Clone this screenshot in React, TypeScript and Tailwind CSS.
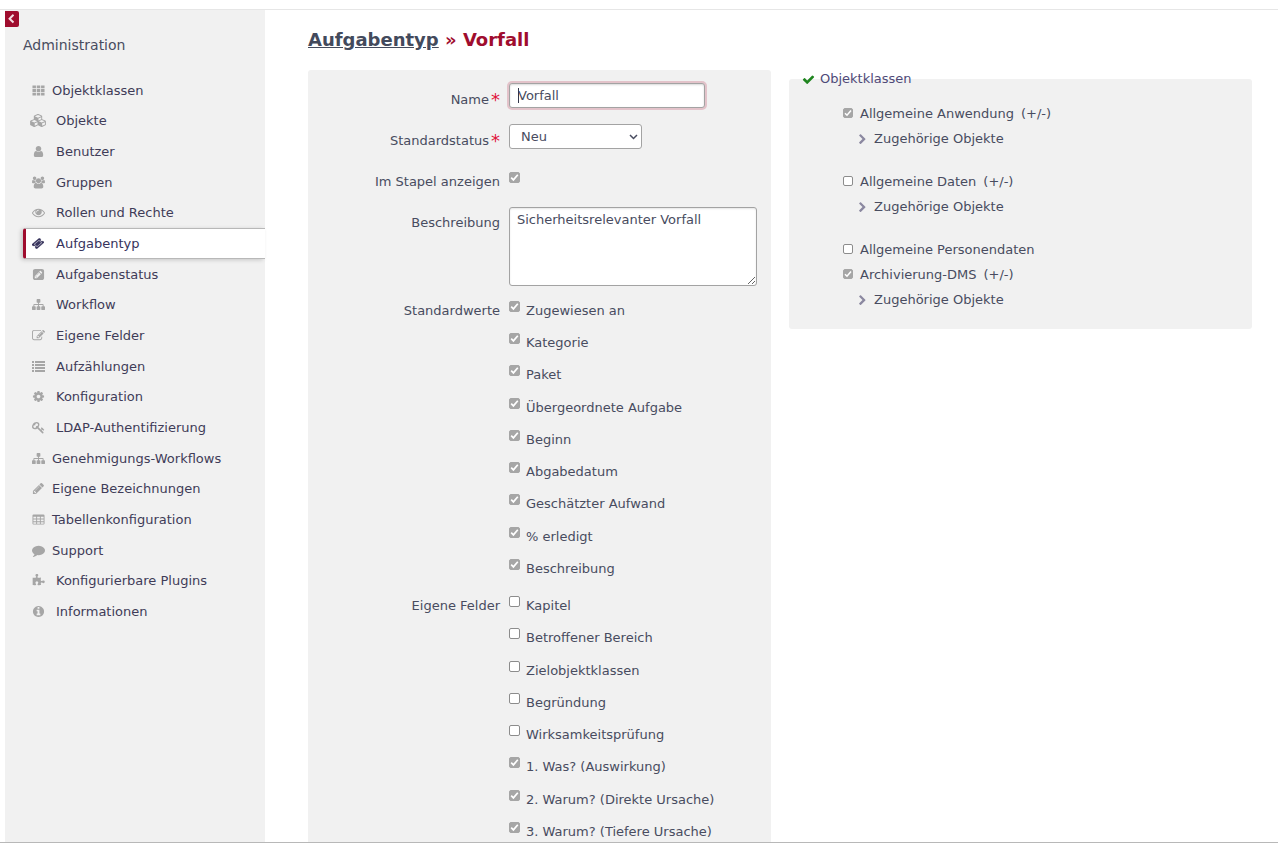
import type { ReactNode } from 'react';

const shapes = {
  th: {
    box: '0 0 1664 1792',
    d: 'M0 192h480v384h-480zM592 192h480v384h-480zM1184 192h480v384h-480zM0 704h480v384h-480zM592 704h480v384h-480zM1184 704h480v384h-480zM0 1216h480v384h-480zM592 1216h480v384h-480zM1184 1216h480v384h-480z',
  },
  cubes: {
    box: '0 0 2176 1792',
    d: 'M640 1632l384-192v-314l-384 164v342zm-64-454l404-173-404-173-404 173zm1088 454l384-192v-314l-384 164v342zm-64-454l404-173-404-173-404 173zm-448-293l384-165v-266l-384 164v267zm-64-379l441-189-441-189-441 189zm1088 518v416q0 36-19 67t-52 47l-448 224q-25 14-57 14t-57-14l-448-224q-5-2-7-4-2 2-7 4l-448 224q-25 14-57 14t-57-14l-448-224q-33-16-52-47t-19-67v-416q0-38 21.5-70t56.5-48l434-186v-400q0-38 21.5-70t56.5-48l448-192q23-10 50-10t50 10l448 192q35 16 56.5 48t21.5 70v400l434 186q36 16 57 48t21 70z',
  },
  user: {
    box: '0 0 1792 1792',
    d: 'M1536 1399q0 109-62.5 187t-150.5 78h-854q-88 0-150.5-78t-62.5-187q0-85 8.5-160.5t31.5-152 58.5-131 94-89 134.5-34.5q131 128 313 128t313-128q76 0 134.5 34.5t94 89 58.5 131 31.5 152 8.5 160.5zm-256-887q0 159-112.5 271.5t-271.5 112.5-271.5-112.5-112.5-271.5 112.5-271.5 271.5-112.5 271.5 112.5 112.5 271.5z',
  },
  users: {
    box: '0 0 1920 1792',
    d: 'M593 896q-162 5-265 128h-134q-82 0-138-40.5t-56-118.5q0-353 124-353 6 0 43.5 21t97.5 42.5 119 21.5q67 0 133-23-5 37-5 66 0 139 81 256zm1071 637q0 120-73 189.5t-194 69.5h-874q-121 0-194-69.5t-73-189.5q0-53 3.5-103.5t14-109 26.5-108.5 43-97.5 62-81 85.5-53.5 111.5-20q10 0 43 21.5t73 48 107 48 135 21.5 135-21.5 107-48 73-48 43-21.5q61 0 111.5 20t85.5 53.5 62 81 43 97.5 26.5 108.5 14 109 3.5 103.5zm-1024-1277q0 106-75 181t-181 75-181-75-75-181 75-181 181-75 181 75 75 181zm704 384q0 159-112.5 271.5t-271.5 112.5-271.5-112.5-112.5-271.5 112.5-271.5 271.5-112.5 271.5 112.5 112.5 271.5zm576 225q0 78-56 118.5t-138 40.5h-134q-103-123-265-128 81-117 81-256 0-29-5-66 66 23 133 23 59 0 119-21.5t97.5-42.5 43.5-21q124 0 124 353zm-128-609q0 106-75 181t-181 75-181-75-75-181 75-181 181-75 181 75 75 181z',
  },
  eye: {
    box: '0 0 1792 1792',
    d: 'M1664 960q-152-236-381-353 61 104 61 225 0 185-131.5 316.5t-316.5 131.5-316.5-131.5-131.5-316.5q0-121 61-225-229 117-381 353 133 205 333.5 326.5t434.5 121.5 434.5-121.5 333.5-326.5zm-720-384q0-20-14-34t-34-14q-125 0-214.5 89.5t-89.5 214.5q0 20 14 34t34 14 34-14 14-34q0-86 61-147t147-61q20 0 34-14t14-34zm848 384q0 34-20 69-140 230-376.5 368.5t-499.5 138.5-499.5-139-376.5-368q-20-35-20-69t20-69q140-229 376.5-368t499.5-139 499.5 139 376.5 368q20 35 20 69z',
  },
  ticket: {
    box: '60 0 1672 1792',
    d: 'M1024 452l316 316-572 572-316-316zm-211 979l618-618q19-19 19-45t-19-45l-362-362q-18-18-45-18t-45 18l-618 618q-19 19-19 45t19 45l362 362q18 18 45 18t45-18zm889-637l-907 908q-37 37-90.5 37t-90.5-37l-126-126q56-56 56-136t-56-136-136-56-136 56l-125-126q-37-37-37-90.5t37-90.5l907-906q37-37 90.5-37t90.5 37l125 125q-56 56-56 136t56 136 136 56 136-56l126 125q37 37 37 90.5t-37 90.5z',
  },
  pencilSquare: {
    box: '-128 0 1792 1792',
    d: 'M404 1108l152 152-52 52h-56v-96h-96v-56zm414-390q14 13-3 30l-291 291q-17 17-30 3-14-13 3-30l291-291q17-17 30-3zm-274 690l544-544-288-288-544 544v288h288zm608-608l92-92q28-28 28-68t-28-68l-152-152q-28-28-68-28t-68 28l-92 92zm384-384v960q0 119-84.5 203.5t-203.5 84.5h-960q-119 0-203.5-84.5t-84.5-203.5v-960q0-119 84.5-203.5t203.5-84.5h960q119 0 203.5 84.5t84.5 203.5z',
  },
  sitemap: {
    box: '0 0 1792 1792',
    d: 'M1792 1248v320q0 40-28 68t-68 28h-320q-40 0-68-28t-28-68v-320q0-40 28-68t68-28h96v-192h-512v192h96q40 0 68 28t28 68v320q0 40-28 68t-68 28h-320q-40 0-68-28t-28-68v-320q0-40 28-68t68-28h96v-192h-512v192h96q40 0 68 28t28 68v320q0 40-28 68t-68 28h-320q-40 0-68-28t-28-68v-320q0-40 28-68t68-28h96v-192q0-52 38-90t90-38h512v-192h-96q-40 0-68-28t-28-68v-320q0-40 28-68t68-28h320q40 0 68 28t28 68v320q0 40-28 68t-68 28h-96v192h512q52 0 90 38t38 90v192h96q40 0 68 28t28 68z',
  },
  edit: {
    box: '0 0 1792 1792',
    d: 'M888 1184l116-116-152-152-116 116v56h96v96h56zm440-720q-16-16-33 1l-350 350q-17 17-1 33t33-1l350-350q17-17 1-33zm80 594v190q0 119-84.5 203.5t-203.5 84.5h-832q-119 0-203.5-84.5t-84.5-203.5v-832q0-119 84.5-203.5t203.5-84.5h832q63 0 117 25 15 7 18 23 3 17-9 29l-49 49q-14 14-32 8-23-6-45-6h-832q-66 0-113 47t-47 113v832q0 66 47 113t113 47h832q66 0 113-47t47-113v-126q0-13 9-22l64-64q15-15 35-7t20 29zm-96-738l288 288-672 672h-288v-288zm444 132l-92 92-288-288 92-92q28-28 68-28t68 28l152 152q28 28 28 68t-28 68z',
  },
  list: {
    box: '0 0 1792 1792',
    d: 'M0 138h276v276h-276zM414 138h1378v276h-1378zM0 552h276v276h-276zM414 552h1378v276h-1378zM0 966h276v276h-276zM414 966h1378v276h-1378zM0 1380h276v276h-276zM414 1380h1378v276h-1378z',
  },
  cog: {
    box: '0 0 1792 1792',
    d: 'M1152 896q0-106-75-181t-181-75-181 75-75 181 75 181 181 75 181-75 75-181zm512-109v222q0 12-8 23t-20 13l-185 28q-19 54-39 91 35 50 107 138 10 12 10 25t-9 23q-27 37-99 108t-94 71q-12 0-26-9l-138-108q-44 23-91 38-16 136-29 186-7 28-36 28h-222q-14 0-24.5-8.5t-11.5-21.5l-28-184q-49-16-90-37l-141 107q-10 9-25 9-14 0-25-11-126-114-165-168-7-10-7-23 0-12 8-23 15-21 51-66.5t54-70.5q-27-50-41-99l-183-27q-13-2-21-12.5t-8-23.5v-222q0-12 8-23t19-13l186-28q14-46 39-92-40-57-107-138-10-12-10-24 0-10 9-23 26-36 98.5-107.5t94.5-71.5q13 0 26 10l138 107q44-23 91-38 16-136 29-186 7-28 36-28h222q14 0 24.5 8.5t11.5 21.5l28 184q49 16 90 37l142-107q9-9 24-9 13 0 25 10 129 119 165 170 7 8 7 22 0 12-8 23-15 21-51 66.5t-54 70.5q26 50 41 98l183 28q13 2 21 12.5t8 23.5z',
  },
  key: {
    box: '0 0 1792 1792',
    d: 'M832 512q0-80-56-136t-136-56-136 56-56 136q0 42 19 83-41-19-83-19-80 0-136 56t-56 136 56 136 136 56 136-56 56-136q0-42-19-83 41 19 83 19 80 0 136-56t56-136zm851 704q0 17-49 66t-66 49q-9 0-28.5-16t-36.5-33-38.5-40-24.5-26l-96 96 220 220q28 28 28 68 0 42-39 81t-81 39q-40 0-68-28l-671-671q-176 131-365 131-163 0-265.5-102.5t-102.5-265.5q0-160 95-313t248-248 313-95q163 0 265.5 102.5t102.5 265.5q0 189-131 365l355 355 96-96q-3-3-26-24.5t-40-38.5-33-36.5-16-28.5q0-17 49-66t66-49q13 0 23 10 6 6 46 44.5t82 79.5 86.5 86 73 78 28.5 41z',
  },
  pencil: {
    box: '0 0 1792 1792',
    d: 'M491 1536l91-91-235-235-91 91v107h128v128h107zm523-928q0-22-22-22-10 0-17 7l-542 542q-7 7-7 17 0 22 22 22 10 0 17-7l542-542q7-7 7-17zm-54-192l416 416-832 832h-416v-416zm683 96q0 53-37 90l-166 166-416-416 166-165q36-38 90-38 53 0 91 38l235 234q37 39 37 91z',
  },
  table: {
    box: '0 0 1664 1792',
    d: 'M160 192h1344q160 0 160 160v1088q0 160-160 160h-1344q-160 0-160-160v-1088q0-160 160-160zM128 512v256h384v-256zM640 512v256h384v-256zM1152 512v256h384v-256zM128 896v256h384v-256zM640 896v256h384v-256zM1152 896v256h384v-256zM128 1280v192h384v-192zM640 1280v192h384v-192zM1152 1280v192h384v-192z',
  },
  comment: {
    box: '0 0 1792 1792',
    d: 'M1792 896q0 174-120 321.5t-326 233-450 85.5q-70 0-145-8-198 175-460 242-49 14-114 22-17 2-30.5-9t-17.5-29v-1q-3-4-.5-12t2-10 4.5-9.5l6-9 7-8.5 8-9q7-8 31-34.5t34.5-38 31-39.5 32.5-51 27-59 26-76q-157-89-247.5-220t-90.5-281q0-130 71-248.5t191-204.5 286-136.5 348-50.5q244 0 450 85.5t326 233 120 321.5z',
  },
  puzzle: {
    box: '0 0 1792 1792',
    d: 'M1755 1083q0 81-44.5 135t-123.5 54q-41 0-77.5-17.5t-59-38-56.5-38-71-17.5q-110 0-110 124 0 39 16 115t15 115v5q-22 0-33 1-34 3-97.5 11.5t-115.5 13.5-98 5q-61 0-103-26.5t-42-83.5q0-37 17.5-71t38-56.5 38-59 17.5-77.5q0-79-54-123.5t-135-44.5q-84 0-143 45.5t-59 127.5q0 43 15 83t33.5 64.5 33.5 53 15 50.5q0 45-46 89-37 35-117 35-95 0-245-24-9-2-27.5-4t-27.5-4l-13-2q-1 0-3-1-2 0-2-1v-1024q2 1 17.5 3.5t34 5 21.5 3.5q150 24 245 24 80 0 117-35 46-44 46-89 0-22-15-50.5t-33.5-53-33.5-64.5-15-83q0-82 59-127.5t144-45.5q80 0 134 44.5t54 123.5q0 41-17.5 77.5t-38 59-38 56.5-17.5 71q0 57 42 83.5t103 26.5q64 0 180-15t163-17v2q-1 2-3.5 17.5t-5 34-3.5 21.5q-24 150-24 245 0 80 35 117 44 46 89 46 22 0 50.5-15t53-33.5 64.5-33.5 83-15q82 0 127.5 59t45.5 143z',
  },
  info: {
    box: '0 0 1792 1792',
    d: 'M1152 1376v-160q0-14-9-23t-23-9h-96v-512q0-14-9-23t-23-9h-320q-14 0-23 9t-9 23v160q0 14 9 23t23 9h96v320h-96q-14 0-23 9t-9 23v160q0 14 9 23t23 9h448q14 0 23-9t9-23zm-128-896v-160q0-14-9-23t-23-9h-192q-14 0-23 9t-9 23v160q0 14 9 23t23 9h192q14 0 23-9t9-23zm640 416q0 209-103 385.5t-279.5 279.5-385.5 103-385.5-103-279.5-279.5-103-385.5 103-385.5 279.5-279.5 385.5-103 385.5 103 279.5 279.5 103 385.5z',
  },
  check: {
    box: '0 0 1792 1792',
    d: 'M1671 566q0 40-28 68l-724 724-136 136q-28 28-68 28t-68-28l-136-136-362-362q-28-28-28-68t28-68l136-136q28-28 68-28t68 28l294 295 656-657q28-28 68-28t68 28l136 136q28 28 28 68z',
  },
  chevronLeft: {
    box: '0 0 1792 1792',
    d: 'M1427 301l-531 531 531 531q19 19 19 45t-19 45l-166 166q-19 19-45 19t-45-19l-742-742q-19-19-19-45t19-45l742-742q19-19 45-19t45 19l166 166q19 19 19 45t-19 45z',
  },
  chevronRight: {
    box: '0 0 1792 1792',
    d: 'M1363 877l-742 742q-19 19-45 19t-45-19l-166-166q-19-19-19-45t19-45l531-531-531-531q-19-19-19-45t19-45l166-166q19-19 45-19t45 19l742 742q19 19 19 45t-19 45z',
  },
};

type ShapeName = keyof typeof shapes;

function Icon({ name, className }: { name: ShapeName; className: string }) {
  const shape = shapes[name];
  const bold = name === 'ticket';
  return (
    <svg
      viewBox={shape.box}
      className={className}
      fill="currentColor"
      fillRule="evenodd"
      stroke={bold ? 'currentColor' : 'none'}
      strokeWidth={40}
      preserveAspectRatio={bold ? 'none' : 'xMidYMid meet'}
      aria-hidden="true"
    >
      <path d={shape.d} />
    </svg>
  );
}

type NavEntry = { label: string; icon: ShapeName; near?: boolean; active?: boolean };

const navEntries: NavEntry[] = [
  { label: 'Objektklassen', icon: 'th', near: true },
  { label: 'Objekte', icon: 'cubes' },
  { label: 'Benutzer', icon: 'user' },
  { label: 'Gruppen', icon: 'users' },
  { label: 'Rollen und Rechte', icon: 'eye' },
  { label: 'Aufgabentyp', icon: 'ticket', active: true },
  { label: 'Aufgabenstatus', icon: 'pencilSquare' },
  { label: 'Workflow', icon: 'sitemap' },
  { label: 'Eigene Felder', icon: 'edit' },
  { label: 'Aufzählungen', icon: 'list' },
  { label: 'Konfiguration', icon: 'cog' },
  { label: 'LDAP-Authentifizierung', icon: 'key' },
  { label: 'Genehmigungs-Workflows', icon: 'sitemap', near: true },
  { label: 'Eigene Bezeichnungen', icon: 'pencil', near: true },
  { label: 'Tabellenkonfiguration', icon: 'table', near: true },
  { label: 'Support', icon: 'comment', near: true },
  { label: 'Konfigurierbare Plugins', icon: 'puzzle' },
  { label: 'Informationen', icon: 'info' },
];

const iconSizes: Partial<Record<ShapeName, string>> = {
  cubes: 'h-[13px] w-4',
  ticket: 'h-[11px] w-3',
};

function Sidebar() {
  return (
    <aside className="ml-[5px] w-[260px] shrink-0 bg-[#f1f1f1] pt-px">
      <button
        type="button"
        aria-label="Seitenleiste einklappen"
        className="flex h-4 w-[14px] items-center justify-center rounded-r-[2px] bg-[#9f0d2e] text-[#f3dfe4]"
      >
        <Icon name="chevronLeft" className="mr-[2px] size-[10px]" />
      </button>
      <h2 className="mt-2 pl-[18px] text-sm leading-5 text-[#484c60]">Administration</h2>
      <nav className="mt-5 grid h-[552px] auto-rows-fr pl-[18px]">
        {navEntries.map((entry) => (
          <a
            key={entry.label}
            href={'#' + entry.label}
            className={
              entry.active
                ? 'flex items-center rounded-l-[3px] border-y border-l-[3px] border-y-[#b8b8b8] border-l-[#9f0d2e] bg-white pl-1 text-[#37335c] shadow-[-2px_1px_4px_rgba(0,0,0,0.18)]'
                : 'flex items-center pl-[7px] text-[#3f3c58]'
            }
          >
            <span className={entry.active ? 'flex w-4 justify-center' : 'flex w-4 justify-center text-[#a6a6a6]'}>
              <Icon name={entry.icon} className={iconSizes[entry.icon] ?? 'size-[13px]'} />
            </span>
            <span className={entry.near ? 'pl-[6px]' : 'pl-[10px]'}>{entry.label}</span>
          </a>
        ))}
      </nav>
    </aside>
  );
}

function Tick({ id, checked, className }: { id: string; checked: boolean; className: string }) {
  return (
    <span className={'grid shrink-0 ' + className}>
      <input
        id={id}
        type="checkbox"
        defaultChecked={checked}
        className="peer col-start-1 row-start-1 size-full appearance-none rounded-[2px] border border-[#8c8c8c] bg-white checked:border-[#a6a6a6] checked:bg-[#a6a6a6]"
      />
      <svg
        viewBox="0 0 11 11"
        className="pointer-events-none invisible col-start-1 row-start-1 size-full peer-checked:visible"
        fill="none"
        stroke="#ffffff"
        strokeWidth="1.7"
        aria-hidden="true"
      >
        <path d="M2.2 5.7L4.4 7.9L8.8 2.8" />
      </svg>
    </span>
  );
}

function Row({ label, htmlFor, required, children }: { label: string; htmlFor?: string; required?: boolean; children: ReactNode }) {
  const text = (
    <>
      {label}
      {required && <span className="pl-[2px] text-lg leading-5 text-[#e0143c]">*</span>}
    </>
  );
  return (
    <div className="grid min-h-[41px] grid-cols-[192px_minmax(0,1fr)] gap-[9px]">
      {htmlFor ? (
        <label htmlFor={htmlFor} className="flex justify-end self-start pt-[11px] leading-5">
          {text}
        </label>
      ) : (
        <span className="flex justify-end pt-[11px] leading-5">{text}</span>
      )}
      <div>{children}</div>
    </div>
  );
}

type Option = [string, boolean];

const defaults: Option[] = [
  ['Zugewiesen an', true],
  ['Kategorie', true],
  ['Paket', true],
  ['Übergeordnete Aufgabe', true],
  ['Beginn', true],
  ['Abgabedatum', true],
  ['Geschätzter Aufwand', true],
  ['% erledigt', true],
  ['Beschreibung', true],
];

const customFields: Option[] = [
  ['Kapitel', false],
  ['Betroffener Bereich', false],
  ['Zielobjektklassen', false],
  ['Begründung', false],
  ['Wirksamkeitsprüfung', false],
  ['1. Was? (Auswirkung)', true],
  ['2. Warum? (Direkte Ursache)', true],
  ['3. Warum? (Tiefere Ursache)', true],
];

function OptionList({ prefix, options, className }: { prefix: string; options: Option[]; className: string }) {
  return (
    <div className={'grid auto-rows-fr ' + className}>
      {options.map(([label, checked], i) => (
        <div key={label} className="flex gap-[6px]">
          <Tick id={prefix + i} checked={checked} className="mt-[11px] size-[11px]" />
          <label htmlFor={prefix + i} className="pt-[11px] leading-5">
            {label}
          </label>
        </div>
      ))}
    </div>
  );
}

function TypeForm() {
  return (
    <form className="min-w-0 flex-1 rounded-t-[3px] bg-[#f1f1f1] pt-[9px]">
      <Row label="Name" htmlFor="name" required>
        <div className="relative mt-1 w-[196px]">
          <input
            id="name"
            type="text"
            defaultValue="Vorfall"
            className="block h-[25px] w-full rounded-[3px] border border-[#a3a3a3] bg-white px-2 shadow-[inset_0_1px_2px_rgba(0,0,0,0.15),0_0_0_2px_#e3c3ca] outline-none"
          />
          <span className="absolute top-[5px] left-[9px] h-[15px] w-px bg-[#33364a]" />
        </div>
      </Row>
      <Row label="Standardstatus" htmlFor="status" required>
        <div className="mt-1 grid w-[133px] items-center">
          <select
            id="status"
            defaultValue="Neu"
            className="col-start-1 row-start-1 h-[25px] appearance-none rounded-[3px] border border-[#a3a3a3] bg-white px-[11px]"
          >
            <option>Neu</option>
          </select>
          <svg
            viewBox="0 0 9 6"
            className="pointer-events-none col-start-1 row-start-1 mr-1 h-[6px] w-[9px] justify-self-end"
            fill="none"
            stroke="#484c60"
            strokeWidth="1.5"
            aria-hidden="true"
          >
            <path d="M1 1L4.5 4.5L8 1" />
          </svg>
        </div>
      </Row>
      <Row label="Im Stapel anzeigen" htmlFor="stack">
        <Tick id="stack" checked className="mt-[11px] size-[11px]" />
      </Row>
      <Row label="Beschreibung" htmlFor="description">
        <textarea
          id="description"
          defaultValue="Sicherheitsrelevanter Vorfall"
          className="mt-[5px] mb-1 block h-[79px] w-[248px] rounded-[3px] border border-[#a3a3a3] bg-white px-[7px] py-1 leading-4 shadow-[inset_0_1px_2px_rgba(0,0,0,0.1)]"
        />
      </Row>
      <Row label="Standardwerte">
        <OptionList prefix="default-" options={defaults} className="mb-[5px] h-[290px]" />
      </Row>
      <Row label="Eigene Felder">
        <OptionList prefix="custom-" options={customFields} className="h-[258px]" />
      </Row>
    </form>
  );
}

const classes = [
  { label: 'Allgemeine Anwendung', checked: true, nested: true },
  { label: 'Allgemeine Daten', checked: false, nested: true },
  { label: 'Allgemeine Personendaten', checked: false, nested: false },
  { label: 'Archivierung-DMS', checked: true, nested: true },
];

function ObjectClasses() {
  return (
    <fieldset className="min-w-0 flex-1 self-start rounded-[3px] bg-[#f1f1f1] pb-[17px]">
      <legend className="ml-[13px] flex h-[18px] items-center gap-[5px] text-[#4f4a78]">
        <Icon name="check" className="size-[13px] text-[#1f851f]" />
        Objektklassen
      </legend>
      <ul className="pt-[13px] pl-[54px]">
        {classes.map((item, i) => (
          <li key={item.label} className={item.nested && i < 3 ? 'mb-[18px]' : ''}>
            <div className="flex h-[25px] items-center">
              <Tick id={'class-' + i} checked={item.checked} className="mb-[2px] size-[10px]" />
              <label htmlFor={'class-' + i} className="pl-[7px]">
                {item.label}
              </label>
              {item.nested && (
                <a href="#toggle" className="pl-[7px]">
                  (+/-)
                </a>
              )}
            </div>
            {item.nested && (
              <a href="#objects" className="flex h-[25px] items-center gap-[6px] pl-[14px]">
                <Icon name="chevronRight" className="mt-px size-[11px] text-[#8b88a0]" />
                Zugehörige Objekte
              </a>
            )}
          </li>
        ))}
      </ul>
    </fieldset>
  );
}

export default function App() {
  return (
    <div className="flex h-screen flex-col overflow-hidden border-b border-[#b8b8b8] bg-white font-['DejaVu_Sans',sans-serif] text-[13px] text-[#484c60]">
      <div className="h-[10px] shrink-0 border-b border-[#e6e6e6]" />
      <div className="flex min-h-0 flex-1">
        <Sidebar />
        <main className="min-w-0 flex-1 pt-[18px] pr-[26px] pl-[43px]">
          <h1 className="text-lg leading-6 font-bold text-[#9f0d2e]">
            <a href="#types" className="text-[#434a5c] underline">
              Aufgabentyp
            </a>{' '}
            » Vorfall
          </h1>
          <div className="mt-[18px] flex gap-[18px]">
            <TypeForm />
            <ObjectClasses />
          </div>
        </main>
      </div>
    </div>
  );
}
